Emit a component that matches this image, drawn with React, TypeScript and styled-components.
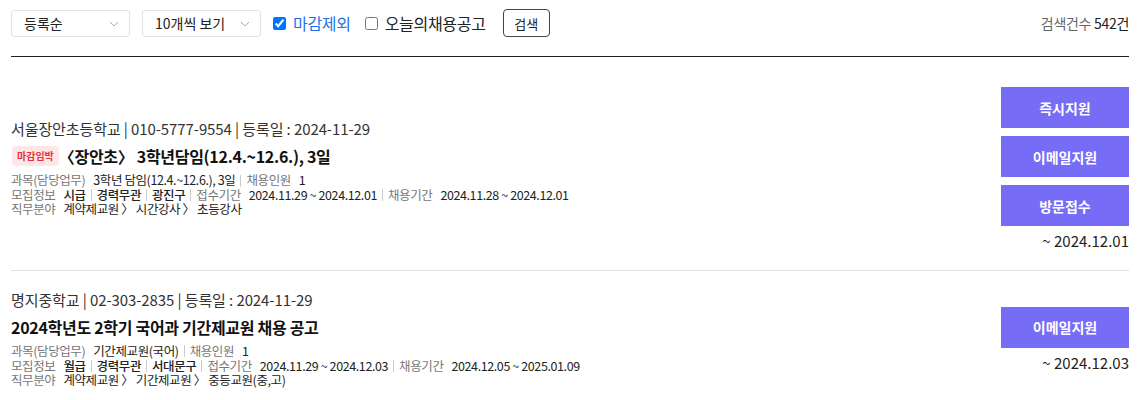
import styled, { createGlobalStyle } from "styled-components"

const GlobalStyle = createGlobalStyle`
body {
  margin: 0;
  background: #fff;
  font-family: "Noto Sans CJK KR", "Noto Sans", sans-serif;
  color: #222;
}
`

type JobType = {
    school: string
    phone: string
    date: string
    urgent?: boolean
    title: string
    subject: string
    count: string
    pay: string
    career: string
    area: string
    receipt: string
    period: string
    field: string
    actions: string[]
    until: string
}

const jobs: JobType[] = [
    {
        school: "서울장안초등학교",
        phone: "010-5777-9554",
        date: "2024-11-29",
        urgent: true,
        title: "〈장안초〉 3학년담임(12.4.~12.6.), 3일",
        subject: "3학년 담임(12.4.~12.6.), 3일",
        count: "1",
        pay: "시급",
        career: "경력무관",
        area: "광진구",
        receipt: "2024.11.29 ~ 2024.12.01",
        period: "2024.11.28 ~ 2024.12.01",
        field: "계약제교원 〉 시간강사 〉 초등강사",
        actions: ["즉시지원", "이메일지원", "방문접수"],
        until: "~ 2024.12.01",
    },
    {
        school: "명지중학교",
        phone: "02-303-2835",
        date: "2024-11-29",
        title: "2024학년도 2학기 국어과 기간제교원 채용 공고",
        subject: "기간제교원(국어)",
        count: "1",
        pay: "월급",
        career: "경력무관",
        area: "서대문구",
        receipt: "2024.11.29 ~ 2024.12.03",
        period: "2024.12.05 ~ 2025.01.09",
        field: "계약제교원 〉 기간제교원 〉 중등교원(중,고)",
        actions: ["이메일지원"],
        until: "~ 2024.12.03",
    },
]

const Chevron = () => (
    <svg width="10" height="6" viewBox="0 0 10 6" fill="none">
        <path d="M1 1l4 4 4-4" stroke="#aaa" strokeWidth="1" />
    </svg>
)

const Select = ({ text }: { text: string }) => (
    <StyledSelect>
        <span>{text}</span>
        <Chevron />
    </StyledSelect>
)

const JobRow = ({ job }: { job: JobType }) => {
    return (
        <Row>
            <Info>
                <School>{job.school} | {job.phone} | 등록일 : {job.date}</School>
                <TitleLine>
                    {job.urgent && <Badge>마감임박</Badge>}
                    <Title>{job.title}</Title>
                </TitleLine>
                <Details>
                    <Line>
                        <Label>과목(담당업무)</Label>
                        <Value>{job.subject}</Value>
                        <Sep />
                        <Label>채용인원</Label>
                        <Value>{job.count}</Value>
                    </Line>
                    <Line>
                        <Label>모집정보</Label>
                        <Value $strong>{job.pay}</Value>
                        <Sep />
                        <Value $strong>{job.career}</Value>
                        <Sep />
                        <Value $strong>{job.area}</Value>
                        <Sep />
                        <Label>접수기간</Label>
                        <Value>{job.receipt}</Value>
                        <Sep />
                        <Label>채용기간</Label>
                        <Value>{job.period}</Value>
                    </Line>
                    <Line>
                        <Label>직무분야</Label>
                        <Value>{job.field}</Value>
                    </Line>
                </Details>
            </Info>
            <Side>
                {job.actions.map((a) => (
                    <ActionButton key={a}>{a}</ActionButton>
                ))}
                <Until>{job.until}</Until>
            </Side>
        </Row>
    )
}

export default function App() {
    return (
        <Page>
            <GlobalStyle />
            <Toolbar>
                <Controls>
                    <Select text="등록순" />
                    <Select text="10개씩 보기" />
                    <Check>
                        <input type="checkbox" defaultChecked />
                        <CheckText $active>마감제외</CheckText>
                    </Check>
                    <Check>
                        <input type="checkbox" />
                        <CheckText>오늘의채용공고</CheckText>
                    </Check>
                    <SearchButton>검색</SearchButton>
                </Controls>
                <Total>검색건수 <b>542건</b></Total>
            </Toolbar>
            <List>
                {jobs.map((j) => (
                    <JobRow key={j.title} job={j} />
                ))}
            </List>
        </Page>
    )
}

const Page = styled.div`
padding: 9px 11px 0 11px;
width: 1118px;
`
const Toolbar = styled.div`
display: flex;
align-items: center;
justify-content: space-between;
padding-bottom: 19px;
border-bottom: 1px solid #222;
`
const Controls = styled.div`
display: flex;
align-items: center;
`
const StyledSelect = styled.div`
box-sizing: border-box;
width: 119px;
height: 27px;
border: 1px solid #e2e2e2;
border-radius: 3px;
display: flex;
align-items: center;
justify-content: space-between;
padding: 0 10px 0 12px;
margin-right: 12px;
font-size: 14px;
color: #222;
& svg { margin-top: 1px; }
`
const Check = styled.label`
display: flex;
align-items: center;
margin-right: 14px;
& input {
  margin: 0 7px 0 0;
  width: 13px;
  height: 13px;
}
`
const CheckText = styled.span<{ $active?: boolean }>`
font-size: 16px;
letter-spacing: -0.3px;
color: ${(p) => (p.$active ? "#1a73e8" : "#222")};
`
const SearchButton = styled.button`
box-sizing: border-box;
height: 28px;
width: 47px;
border: 1px solid #444;
border-radius: 4px;
background: #fff;
font-family: inherit;
font-size: 13px;
color: #222;
padding: 0;
margin-left: 3px;
`
const Total = styled.div`
font-size: 14px;
letter-spacing: -0.3px;
color: #666;
& b { font-weight: 400; color: #222; }
`
const List = styled.div`
padding-top: 10px;
`
const Row = styled.div`
display: flex;
align-items: center;
justify-content: space-between;
padding: 20px 0;
border-bottom: 1px solid #e0e0e0;
&:last-child { border-bottom: none; }
`
const Info = styled.div`
display: flex;
flex-direction: column;
`
const School = styled.div`
font-size: 15px;
line-height: 18px;
letter-spacing: -0.1px;
color: #333;
`
const TitleLine = styled.div`
display: flex;
align-items: center;
margin-top: 7px;
margin-bottom: 6px;
`
const Badge = styled.span`
background: #ffe6e9;
color: #e8303a;
font-size: 10px;
font-weight: 700;
line-height: 20px;
padding: 0 5px;
border-radius: 4px;
margin-left: 1px;
`
const Title = styled.h2`
margin: 0;
font-size: 16px;
font-weight: 700;
line-height: 22px;
letter-spacing: -0.3px;
color: #111;
`
const Details = styled.div`
display: flex;
flex-direction: column;
`
const Line = styled.div`
display: flex;
align-items: center;
font-size: 12.5px;
line-height: 14.5px;
letter-spacing: -0.4px;
`
const Label = styled.span`
color: #777;
margin-right: 8px;
`
const Value = styled.span<{ $strong?: boolean }>`
color: #222;
font-weight: ${(p) => (p.$strong ? 500 : 400)};
`
const Sep = styled.span`
width: 1px;
height: 12px;
background: #ccc;
margin: 0 5px;
`
const Side = styled.div`
display: flex;
flex-direction: column;
align-items: flex-end;
gap: 8px;
`
const ActionButton = styled.button`
width: 128px;
height: 41px;
border: none;
background: #766cf6;
color: #fff;
font-family: inherit;
font-size: 14px;
font-weight: 700;
padding: 0;
`
const Until = styled.div`
font-size: 15px;
line-height: 18px;
color: #222;
margin-top: -2px;
`
